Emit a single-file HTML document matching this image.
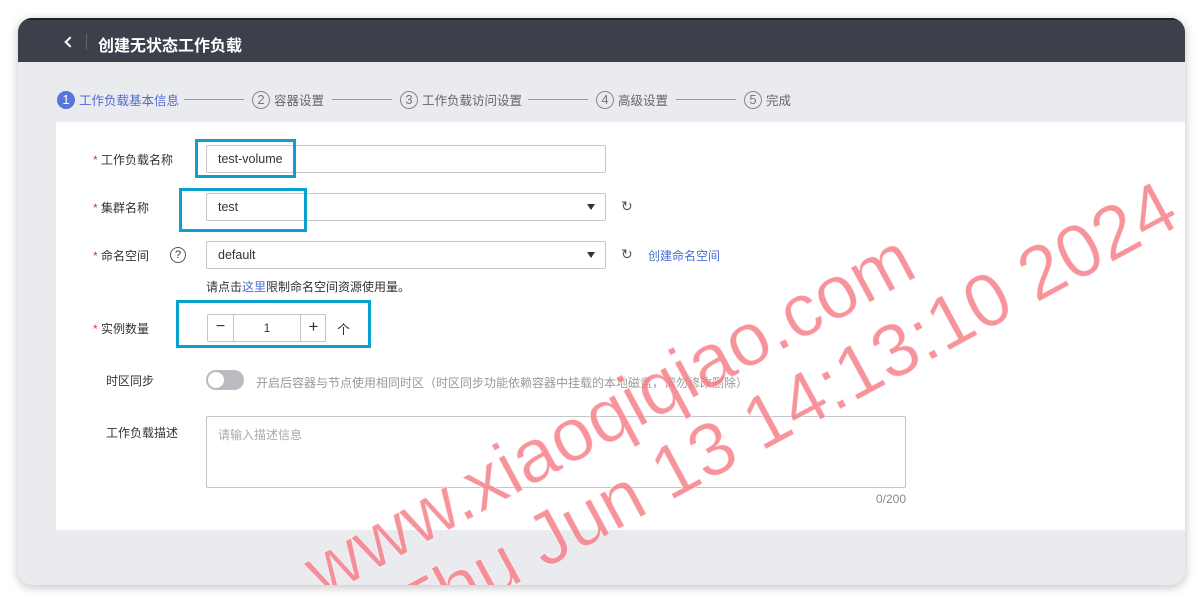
<!DOCTYPE html>
<html><head><meta charset="utf-8"><style>
*{margin:0;padding:0;box-sizing:border-box}
body{width:1203px;height:604px;background:#fff;position:relative;overflow:hidden;font-family:"Liberation Sans","Noto Sans CJK SC",sans-serif;font-size:12px;color:#333}
.win{position:absolute;left:18px;top:18px;width:1167px;height:567px;border-radius:14px;overflow:hidden;background:#e9ebef;box-shadow:0 2px 10px rgba(0,0,0,.25)}
.hd{position:absolute;left:0;top:0;width:100%;height:44px;background:#3b404b;border-top:2px solid #1e2026}
.a{position:absolute;white-space:nowrap}
.card{position:absolute;left:38px;top:104px;width:1129px;height:408px;background:#fff}
.inp{position:absolute;border:1px solid #c4c6cc;border-radius:2px;background:#fff;height:28px}
.box{position:absolute;border:3px solid #0aa1cf}
.star{color:#e0393e;font-size:12px}
.step{position:absolute;top:72px;font-size:12.5px;color:#666;white-space:nowrap;display:flex;align-items:center}
.c{display:inline-block;width:18px;height:18px;border:1px solid #888;border-radius:50%;text-align:center;line-height:16px;font-size:13px;margin-right:4px;color:#777}
.ln{position:absolute;top:81px;height:1px;background:#999}
.arr{position:absolute;right:10px;top:10px;width:0;height:0;border-left:4px solid transparent;border-right:4px solid transparent;border-top:6px solid #333}
.wm{position:absolute;font-size:75px;color:rgba(245,120,130,.8);-webkit-text-stroke:1px rgba(255,255,255,.6);transform-origin:0 100%;transform:rotate(-28.4deg);white-space:nowrap;line-height:1}
</style></head><body>
<div class="win">
 <div class="hd">
  <div class="a" style="left:48px;top:18px;width:8px;height:8px;border-left:2px solid #fff;border-bottom:2px solid #fff;transform:rotate(45deg)"></div>
  <div class="a" style="left:68px;top:14px;width:1px;height:16px;background:#666"></div>
  <div class="a" style="left:80px;top:12px;color:#fff;font-size:16px;font-weight:bold">创建无状态工作负载</div>
 </div>
 <div class="step" style="left:39px;color:#4f6bd1"><span class="c" style="background:#5577dc;border-color:#5577dc;color:#fff">1</span>工作负载基本信息</div>
 <div class="ln" style="left:166px;width:60px"></div>
 <div class="step" style="left:234px"><span class="c">2</span>容器设置</div>
 <div class="ln" style="left:314px;width:60px"></div>
 <div class="step" style="left:382px"><span class="c">3</span>工作负载访问设置</div>
 <div class="ln" style="left:510px;width:60px"></div>
 <div class="step" style="left:578px"><span class="c">4</span>高级设置</div>
 <div class="ln" style="left:658px;width:60px"></div>
 <div class="step" style="left:726px"><span class="c">5</span>完成</div>
</div>
<div style="position:absolute;left:18px;top:18px;width:1167px;height:567px;border-radius:14px;overflow:hidden">
 <div class="card">
  <div class="a" style="left:37px;top:29px"><span class="star">* </span>工作负载名称</div>
  <div class="inp" style="left:150px;top:23px;width:400px"><span class="a" style="left:11px;top:6px;font-size:12.5px">test-volume</span></div>
  <div class="a" style="left:37px;top:77px"><span class="star">* </span>集群名称</div>
  <div class="inp" style="left:150px;top:71px;width:400px"><span class="a" style="left:11px;top:6px;font-size:12.5px">test</span><span class="arr"></span></div>
  <div class="a" style="left:565px;top:76px;font-size:14px;color:#555">↻</div>
  <div class="a" style="left:37px;top:125px"><span class="star">* </span>命名空间</div>
  <div class="a" style="left:114px;top:125px;width:16px;height:16px;border:1px solid #555;border-radius:50%;text-align:center;line-height:14px;font-size:11px">?</div>
  <div class="inp" style="left:150px;top:119px;width:400px"><span class="a" style="left:11px;top:6px;font-size:12.5px">default</span><span class="arr"></span></div>
  <div class="a" style="left:565px;top:124px;font-size:14px;color:#555">↻</div>
  <div class="a" style="left:592px;top:125px;color:#4a6fd2">创建命名空间</div>
  <div class="a" style="left:150px;top:156px">请点击<span style="color:#4a6fd2">这里</span>限制命名空间资源使用量。</div>
  <div class="a" style="left:37px;top:198px"><span class="star">* </span>实例数量</div>
  <div class="inp" style="left:151px;top:192px;width:119px;height:28px">
   <div class="a" style="left:0;top:0;width:26px;height:26px;border-right:1px solid #c4c6cc;text-align:center;line-height:24px;font-size:16px">−</div>
   <div class="a" style="left:26px;top:6px;width:66px;text-align:center">1</div>
   <div class="a" style="left:92px;top:0;width:26px;height:26px;border-left:1px solid #c4c6cc;text-align:center;line-height:24px;font-size:17px">+</div>
  </div>
  <div class="a" style="left:281px;top:197px;font-size:13px">个</div>
  <div class="a" style="left:50px;top:250px">时区同步</div>
  <div class="a" style="left:150px;top:248px;width:38px;height:20px;border-radius:10px;background:#b9bbc0"><div class="a" style="left:2px;top:2px;width:16px;height:16px;border-radius:50%;background:#fff"></div></div>
  <div class="a" style="left:200px;top:252px;color:#999">开启后容器与节点使用相同时区（时区同步功能依赖容器中挂载的本地磁盘，请勿修改删除）</div>
  <div class="a" style="left:50px;top:302px">工作负载描述</div>
  <div class="inp" style="left:150px;top:294px;width:700px;height:72px"><span class="a" style="left:11px;top:9px;color:#aaa">请输入描述信息</span></div>
  <div class="a" style="left:810px;top:370px;width:40px;text-align:right;color:#888">0/200</div>
  <div class="box" style="left:139px;top:17px;width:101px;height:39px"></div>
  <div class="box" style="left:123px;top:66px;width:128px;height:44px"></div>
  <div class="box" style="left:120px;top:178px;width:195px;height:48px"></div>
 </div>
 <div class="wm" style="left:310px;top:516px">www.xiaoqiqiao.com</div>
 <div class="wm" style="left:400px;top:558px">Thu Jun 13 14:13:10 2024</div>
</div>
</body></html>
